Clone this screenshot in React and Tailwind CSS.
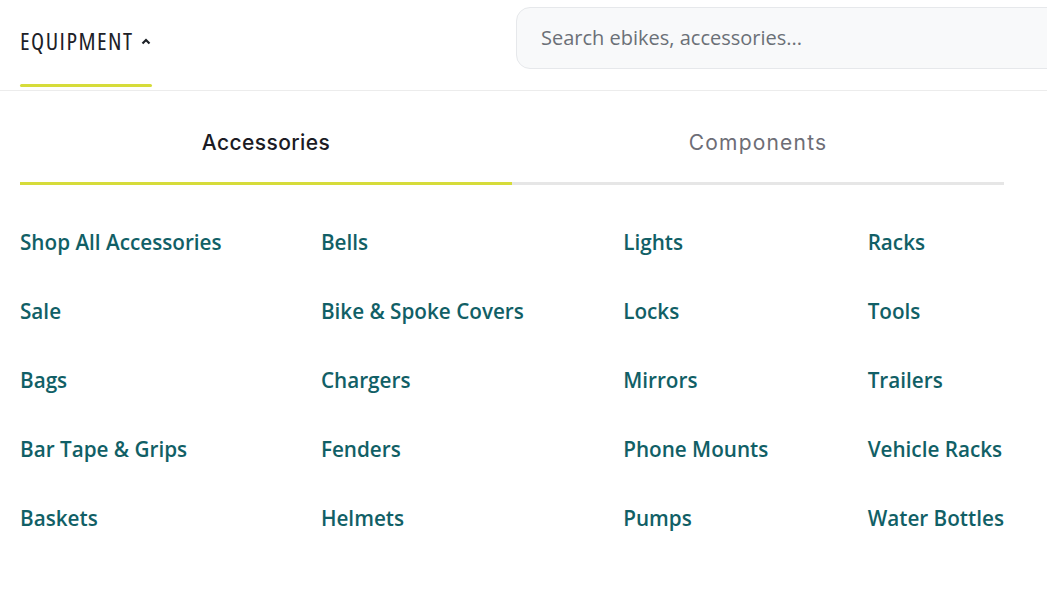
import React from "react";

const cols = [
  ["Shop All Accessories", "Sale", "Bags", "Bar Tape & Grips", "Baskets"],
  ["Bells", "Bike & Spoke Covers", "Chargers", "Fenders", "Helmets"],
  ["Lights", "Locks", "Mirrors", "Phone Mounts", "Pumps"],
  ["Racks", "Tools", "Trailers", "Vehicle Racks", "Water Bottles"],
];

export default function App() {
  return (
    <div className="w-[1047px] h-[592px] bg-white overflow-hidden font-['Open_Sans',sans-serif]">
      <header className="h-[91px] border-b border-[#ececec] flex items-stretch">
        <div className="ml-5 w-[132px] shrink-0 flex flex-col">
          <div className="flex-1 flex items-center gap-[7px] pb-[2px]">
            <span className="text-[24px] leading-none text-[#1d2127] font-medium tracking-[1.5px] font-['Open_Sans',sans-serif] [font-stretch:75%]">
              EQUIPMENT
            </span>
            <svg width="10" height="7" viewBox="0 0 10 7" className="mt-[1px]">
              <path d="M1.5 5.5 L5 2 L8.5 5.5" fill="none" stroke="#1d2127" strokeWidth="2.2" />
            </svg>
          </div>
          <div className="h-[3px] bg-[#d6dc3a] rounded-full mb-[3px]" />
        </div>
        <div className="ml-[364px] mt-[7px] w-[560px] h-[62px] shrink-0 rounded-[14px] border border-[#e6e8eb] bg-[#f8f9fa] flex items-center pl-[24px]">
          <span className="text-[20px] text-[#6b7077]">Search ebikes, accessories...</span>
        </div>
      </header>

      <div className="mx-5 w-[984px] flex">
        <div className="flex-1 h-[94px] flex flex-col">
          <div className="flex-1 flex items-center justify-center pt-[12px]">
            <span className="font-['Inter',sans-serif] text-[21px] font-medium text-[#1b1b24] tracking-[0.4px]">Accessories</span>
          </div>
          <div className="h-[3px] bg-[#d6dc3a]" />
        </div>
        <div className="flex-1 h-[94px] flex flex-col">
          <div className="flex-1 flex items-center justify-center pt-[12px]">
            <span className="font-['Inter',sans-serif] text-[21px] text-[#6d6d76] tracking-[1.2px]">Components</span>
          </div>
          <div className="h-[3px] bg-[#e6e6e6]" />
        </div>
      </div>

      <div className="mx-5 w-[984px] flex justify-between pt-[43px]">
        {cols.map((col, i) => (
          <div key={i} className="flex flex-col gap-[41px]">
            {col.map((t) => (
              <a key={t} className="text-[20.7px] leading-[28px] font-semibold text-[#115f66] whitespace-nowrap">
                {t}
              </a>
            ))}
          </div>
        ))}
      </div>
    </div>
  );
}
